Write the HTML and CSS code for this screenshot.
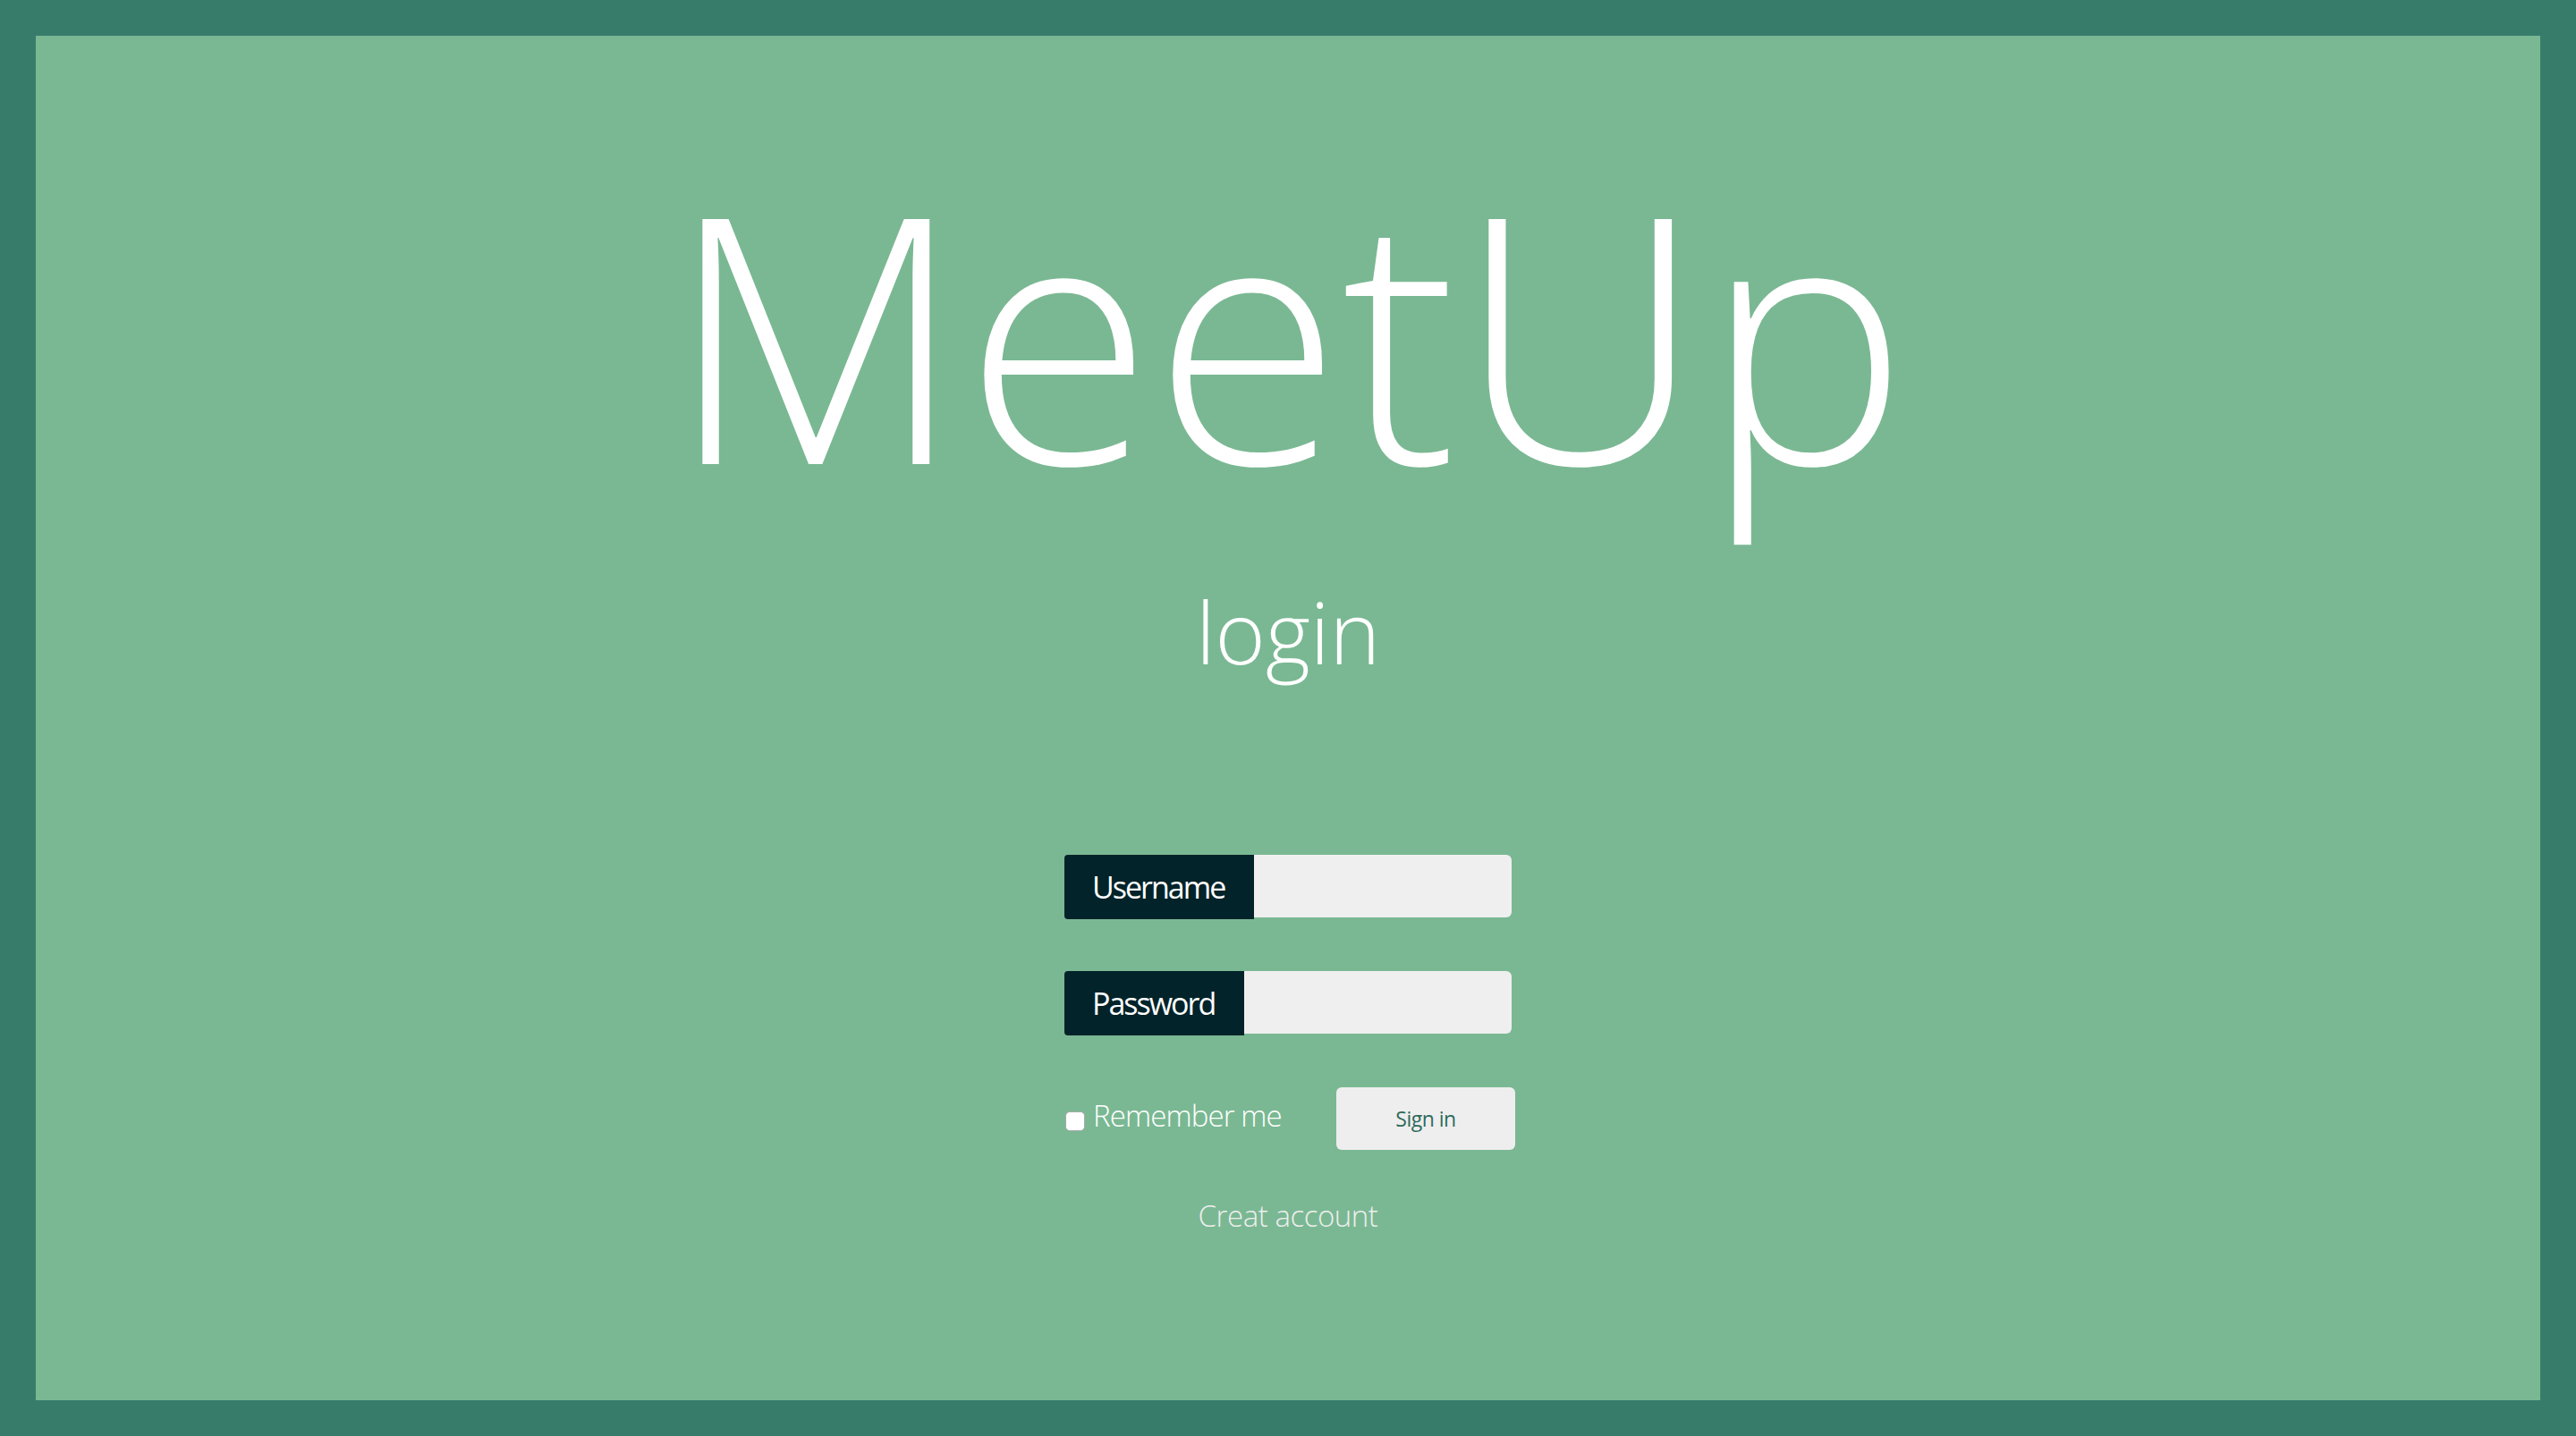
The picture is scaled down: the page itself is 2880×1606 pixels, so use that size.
FILE: index.html
```html
<!DOCTYPE html>
<html>
<head>
<meta charset="utf-8">
<title>MeetUp login</title>
<link rel="stylesheet" href="styles.css">
</head>
<body>
<div class="frame">
  <main class="panel">
    <h1 class="brand">MeetUp</h1>
    <h2 class="subtitle">login</h2>
    <form class="login-form">
      <div class="field field-user">
        <label class="field-label" for="u">Username</label>
        <input class="field-input" id="u" type="text">
      </div>
      <div class="field field-pass">
        <label class="field-label" for="p">Password</label>
        <input class="field-input" id="p" type="password">
      </div>
      <div class="actions">
        <label class="remember"><input type="checkbox" class="remember-box"><span>Remember me</span></label>
        <button type="button" class="signin">Sign in</button>
      </div>
      <a class="create" href="#">Creat account</a>
    </form>
  </main>
</div>
</body>
</html>
```

FILE: styles.css
```css
* { box-sizing: border-box; }
html, body { margin: 0; padding: 0; }
body {
  background: #377c6b;
  font-family: "Open Sans", "Liberation Sans", sans-serif;
  color: #fff;
}
.frame {
  padding: 40px;
  height: 1606px;
}
.panel {
  background: #7ab893;
  height: 100%;
  display: flex;
  flex-direction: column;
  align-items: center;
}
.brand {
  margin: 139px 0 0;
  font-size: 384px;
  font-weight: 300;
  line-height: 1;
  letter-spacing: 0;
}
.subtitle {
  margin: 95px 0 0;
  font-size: 96px;
  font-weight: 300;
  line-height: 1;
}
.login-form {
  margin: 202px 0 0 4px;
  width: 504px;
  display: flex;
  flex-direction: column;
  align-items: stretch;
}
.field {
  display: flex;
  width: 500px;
  height: 72px;
}
.field + .field { margin-top: 58px; }
.field-label {
  background: #022329;
  color: #fff;
  font-size: 34px;
  letter-spacing: -2px;
  line-height: 72px;
  padding: 0 33px 0 31px;
  border-radius: 4px 0 0 4px;
  white-space: nowrap;
}
.field-input {
  flex: 1;
  height: 70px;
  border: none;
  background: #efefef;
  border-radius: 0 6px 6px 0;
  margin: 0;
}
.actions {
  margin-top: 58px;
  display: flex;
  align-items: center;
  justify-content: space-between;
}
.remember {
  display: flex;
  align-items: center;
  margin-bottom: 8px;
  font-size: 33px;
  font-weight: 300;
  letter-spacing: -0.9px;
}
.remember-box {
  -webkit-appearance: none;
  appearance: none;
  width: 22px;
  height: 22px;
  margin: 14px 9px 0 1px;
  background: #fff;
  border: 1px solid #a9a9a9;
  border-radius: 5px;
}
.signin {
  width: 200px;
  height: 70px;
  border: none;
  border-radius: 6px;
  background: #eeeeee;
  color: #2f6b5c;
  font-family: "Open Sans", sans-serif;
  font-size: 23px;
  letter-spacing: -0.5px;
}
.create {
  margin: 57px 0 0 -4px;
  align-self: center;
  color: #eeeeee;
  text-decoration: none;
  font-size: 33px;
  font-weight: 300;
  letter-spacing: -0.45px;
  line-height: 1;
}
```
